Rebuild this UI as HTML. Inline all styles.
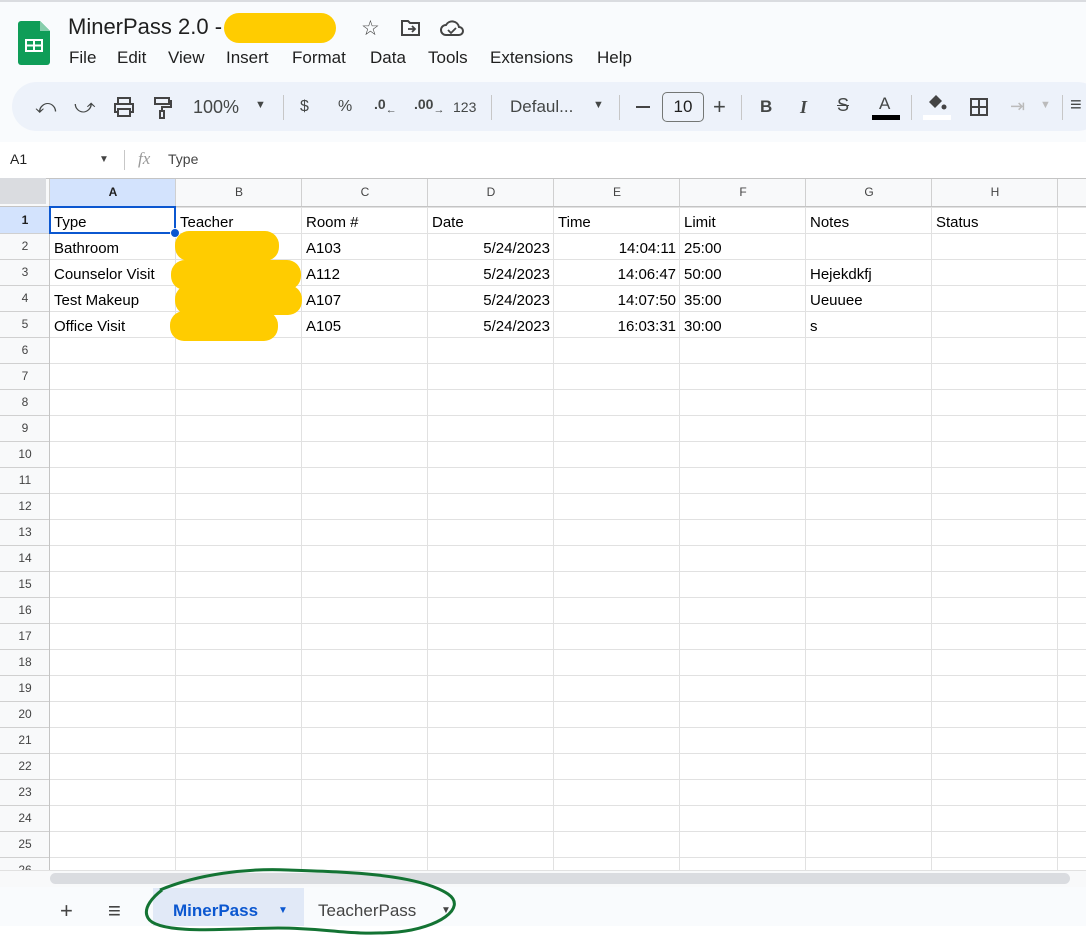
<!DOCTYPE html>
<html><head><style>
*{margin:0;padding:0;box-sizing:border-box}
body{width:1086px;height:936px;overflow:hidden;background:#f9fbfd;font-family:"Liberation Sans",Arial,sans-serif;position:relative;color:#444746}
.a{position:absolute}
.m{position:absolute;top:48px;font-size:17px;color:#1f1f1f}
.tb{font-size:15px;color:#444746}
.cell{position:absolute;font-size:15px;color:#000;height:26px;line-height:29px;white-space:nowrap}
.rh{position:absolute;left:0;width:50px;text-align:center;font-size:12px;color:#444;height:26px;line-height:26px}
.ch{position:absolute;top:178px;height:29px;line-height:29px;text-align:center;font-size:12px;color:#444;width:126px}
.blob{position:absolute;background:#ffcc00;border-radius:14px}
</style></head><body>
<div class="a" style="left:0;top:0;width:1086px;height:2px;background:#dadce0"></div>
<svg class="a" style="left:18px;top:21px" width="32" height="44" viewBox="0 0 32 44"><path d="M3 0h19l10 10v31a3 3 0 0 1-3 3H3a3 3 0 0 1-3-3V3a3 3 0 0 1 3-3z" fill="#0f9d58"/><path d="M22 0v10h10z" fill="#87ceac"/><rect x="7" y="18" width="18" height="13" fill="#fff"/><rect x="9" y="20" width="6" height="3.5" fill="#0f9d58"/><rect x="17" y="20" width="6" height="3.5" fill="#0f9d58"/><rect x="9" y="25.5" width="6" height="3.5" fill="#0f9d58"/><rect x="17" y="25.5" width="6" height="3.5" fill="#0f9d58"/></svg>
<div class="a" style="left:68px;top:14px;font-size:22px;color:#1f1f1f">MinerPass 2.0 -</div>
<div class="blob" style="left:224px;top:13px;width:112px;height:30px;border-radius:15px"></div>
<div class="a" style="left:361px;top:16px;font-size:21px;color:#444">☆</div>
<svg class="a" style="left:400px;top:19px" width="22" height="18" viewBox="0 0 22 18"><path d="M2 2h6l2 2h9v12H2z" fill="none" stroke="#444" stroke-width="2"/><path d="M8 10h7M12 7l3 3-3 3" fill="none" stroke="#444" stroke-width="1.8"/></svg>
<svg class="a" style="left:440px;top:19px" width="24" height="18" viewBox="0 0 24 18"><path d="M6 16a5 5 0 0 1 0-10 7 7 0 0 1 13 2 4 4 0 0 1 0 8z" fill="none" stroke="#444" stroke-width="2"/><path d="M8 11l3 3 5-5" fill="none" stroke="#444" stroke-width="1.8"/></svg>
<div class="m" style="left:69px">File</div><div class="m" style="left:117px">Edit</div><div class="m" style="left:168px">View</div><div class="m" style="left:226px">Insert</div><div class="m" style="left:292px">Format</div><div class="m" style="left:370px">Data</div><div class="m" style="left:428px">Tools</div><div class="m" style="left:490px">Extensions</div><div class="m" style="left:597px">Help</div>
<div class="a" style="left:12px;top:82px;width:1090px;height:49px;background:#edf2fa;border-radius:25px"></div>
<div class="a tb" style="left:35px;top:96px;font-size:20px">⤺</div>
<div class="a tb" style="left:74px;top:96px;font-size:20px">⤻</div>
<svg class="a" style="left:113px;top:97px" width="22" height="20" viewBox="0 0 22 20"><path d="M5 6V1h12v5M5 15H2V7h18v8h-3M5 12h12v7H5z" fill="none" stroke="#444" stroke-width="2"/></svg>
<svg class="a" style="left:152px;top:96px" width="20" height="23" viewBox="0 0 20 23"><path d="M3 2h14v6H3zM17 5h2v6h-9v4M8 15h4v7H8z" fill="none" stroke="#444" stroke-width="2"/></svg>
<div class="a tb" style="left:193px;top:97px;font-size:18px">100%</div>
<div class="a tb" style="left:255px;top:99px;font-size:11px">▼</div>
<div class="a" style="left:283px;top:95px;width:1px;height:25px;background:#c7c7c7"></div>
<div class="a tb" style="left:300px;top:98px;font-size:16px">$</div>
<div class="a tb" style="left:338px;top:98px;font-size:16px">%</div>
<div class="a tb" style="left:374px;top:96px;font-size:14px;font-weight:bold">.0<sub style="font-size:11px">←</sub></div>
<div class="a tb" style="left:414px;top:96px;font-size:14px;font-weight:bold">.00<sub style="font-size:11px">→</sub></div>
<div class="a tb" style="left:453px;top:99px;font-size:14px">123</div>
<div class="a" style="left:491px;top:95px;width:1px;height:25px;background:#c7c7c7"></div>
<div class="a tb" style="left:510px;top:97px;font-size:17px">Defaul...</div>
<div class="a tb" style="left:593px;top:99px;font-size:11px">▼</div>
<div class="a" style="left:619px;top:95px;width:1px;height:25px;background:#c7c7c7"></div>
<div class="a" style="left:636px;top:106px;width:14px;height:2px;background:#444"></div>
<div class="a" style="left:662px;top:92px;width:42px;height:30px;border:1px solid #747775;border-radius:5px;text-align:center;line-height:28px;font-size:17px;color:#1f1f1f">10</div>
<div class="a tb" style="left:713px;top:94px;font-size:22px">+</div>
<div class="a" style="left:741px;top:95px;width:1px;height:25px;background:#c7c7c7"></div>
<div class="a tb" style="left:760px;top:97px;font-size:17px;font-weight:bold">B</div>
<div class="a tb" style="left:800px;top:97px;font-size:18px;font-style:italic;font-family:'Liberation Serif',serif;font-weight:bold">I</div>
<div class="a tb" style="left:837px;top:95px;font-size:18px;text-decoration:line-through">S</div>
<div class="a tb" style="left:879px;top:94px;font-size:17px">A</div>
<div class="a" style="left:872px;top:115px;width:28px;height:5px;background:#000"></div>
<div class="a" style="left:911px;top:95px;width:1px;height:25px;background:#c7c7c7"></div>
<svg class="a" style="left:925px;top:93px" width="22" height="18" viewBox="0 0 22 18"><path d="M4 9l7-7 6 6-7 7z" fill="#444"/><circle cx="19" cy="14" r="2.5" fill="#444"/></svg>
<div class="a" style="left:923px;top:115px;width:28px;height:5px;background:#fff"></div>
<svg class="a" style="left:969px;top:97px" width="20" height="20" viewBox="0 0 20 20"><path d="M2 2h16v16H2zM10 2v16M2 10h16" fill="none" stroke="#444" stroke-width="2"/></svg>
<div class="a tb" style="left:1010px;top:96px;font-size:18px;color:#bbb">⇥</div>
<div class="a tb" style="left:1040px;top:99px;font-size:11px;color:#bbb">▼</div>
<div class="a" style="left:1062px;top:95px;width:1px;height:25px;background:#c7c7c7"></div>
<div class="a tb" style="left:1070px;top:94px;font-size:20px">≡</div>
<div class="a" style="left:0;top:142px;width:1086px;height:36px;background:#fff"></div>
<div class="a" style="left:10px;top:151px;font-size:14px;color:#1f1f1f">A1</div>
<div class="a" style="left:99px;top:154px;font-size:10px;color:#444">▼</div>
<div class="a" style="left:124px;top:150px;width:1px;height:20px;background:#c7c7c7"></div>
<div class="a" style="left:138px;top:149px;font-size:17px;font-style:italic;color:#999;font-family:'Liberation Serif',serif">fx</div>
<div class="a" style="left:168px;top:151px;font-size:14px;color:#444">Type</div>
<div class="a" style="left:0;top:178px;width:1086px;height:692px;background:#fff;
background-image:linear-gradient(to right,#e1e1e1 1px,transparent 1px),linear-gradient(to bottom,#e1e1e1 1px,transparent 1px);
background-size:126px 100%,100% 26px;background-position:49px 0,0 29px;"></div>
<div class="a" style="left:0;top:178px;width:50px;height:692px;background:#f8f9fa;background-image:linear-gradient(to bottom,#d0d0d0 1px,transparent 1px);background-size:100% 26px;background-position:0 29px;border-right:1px solid #c4c4c4"></div>
<div class="a" style="left:0;top:178px;width:1086px;height:29px;background:#f8f9fa;border-top:1px solid #c4c4c4;border-bottom:1px solid #c4c4c4;background-image:linear-gradient(to right,#d0d0d0 1px,transparent 1px);background-size:126px 100%;background-position:49px 0"></div>
<div class="a" style="left:0;top:178px;width:46px;height:26px;background:#dadce0"></div>
<div class="a" style="left:50px;top:179px;width:125px;height:27px;background:#d3e3fd"></div>
<div class="a" style="left:0;top:207px;width:50px;height:26px;background:#d3e3fd"></div>
<div class="ch" style="left:50px;font-weight:bold;color:#1f1f1f">A</div>
<div class="ch" style="left:176px">B</div><div class="ch" style="left:302px">C</div><div class="ch" style="left:428px">D</div><div class="ch" style="left:554px">E</div><div class="ch" style="left:680px">F</div><div class="ch" style="left:806px">G</div><div class="ch" style="left:932px">H</div>
<div class="rh" style="top:207px;font-weight:bold;color:#1f1f1f">1</div>
<div class="rh" style="top:233px">2</div><div class="rh" style="top:259px">3</div><div class="rh" style="top:285px">4</div><div class="rh" style="top:311px">5</div><div class="rh" style="top:337px">6</div><div class="rh" style="top:363px">7</div><div class="rh" style="top:389px">8</div><div class="rh" style="top:415px">9</div><div class="rh" style="top:441px">10</div><div class="rh" style="top:467px">11</div><div class="rh" style="top:493px">12</div><div class="rh" style="top:519px">13</div><div class="rh" style="top:545px">14</div><div class="rh" style="top:571px">15</div><div class="rh" style="top:597px">16</div><div class="rh" style="top:623px">17</div><div class="rh" style="top:649px">18</div><div class="rh" style="top:675px">19</div><div class="rh" style="top:701px">20</div><div class="rh" style="top:727px">21</div><div class="rh" style="top:753px">22</div><div class="rh" style="top:779px">23</div><div class="rh" style="top:805px">24</div><div class="rh" style="top:831px">25</div><div class="rh" style="top:857px;height:13px;overflow:hidden">26</div>
<div class="a" style="left:49px;top:206px;width:127px;height:28px;border:2px solid #0b57d0"></div>
<div class="a" style="left:170px;top:228px;width:10px;height:10px;border-radius:50%;background:#0b57d0;border:1px solid #fff"></div>
<div class="cell" style="left:54px;top:208px">Type</div><div class="cell" style="left:180px;top:208px">Teacher</div><div class="cell" style="left:306px;top:208px">Room #</div><div class="cell" style="left:432px;top:208px">Date</div><div class="cell" style="left:558px;top:208px">Time</div><div class="cell" style="left:684px;top:208px">Limit</div><div class="cell" style="left:810px;top:208px">Notes</div><div class="cell" style="left:936px;top:208px">Status</div>
<div class="cell" style="left:54px;top:234px">Bathroom</div><div class="cell" style="left:306px;top:234px">A103</div><div class="cell" style="left:428px;width:122px;text-align:right;top:234px">5/24/2023</div><div class="cell" style="left:554px;width:122px;text-align:right;top:234px">14:04:11</div><div class="cell" style="left:684px;top:234px">25:00</div>
<div class="cell" style="left:54px;top:260px">Counselor Visit</div><div class="cell" style="left:306px;top:260px">A112</div><div class="cell" style="left:428px;width:122px;text-align:right;top:260px">5/24/2023</div><div class="cell" style="left:554px;width:122px;text-align:right;top:260px">14:06:47</div><div class="cell" style="left:684px;top:260px">50:00</div><div class="cell" style="left:810px;top:260px">Hejekdkfj</div>
<div class="cell" style="left:54px;top:286px">Test Makeup</div><div class="cell" style="left:306px;top:286px">A107</div><div class="cell" style="left:428px;width:122px;text-align:right;top:286px">5/24/2023</div><div class="cell" style="left:554px;width:122px;text-align:right;top:286px">14:07:50</div><div class="cell" style="left:684px;top:286px">35:00</div><div class="cell" style="left:810px;top:286px">Ueuuee</div>
<div class="cell" style="left:54px;top:312px">Office Visit</div><div class="cell" style="left:306px;top:312px">A105</div><div class="cell" style="left:428px;width:122px;text-align:right;top:312px">5/24/2023</div><div class="cell" style="left:554px;width:122px;text-align:right;top:312px">16:03:31</div><div class="cell" style="left:684px;top:312px">30:00</div><div class="cell" style="left:810px;top:312px">s</div>
<div class="blob" style="left:175px;top:231px;width:104px;height:30px"></div>
<div class="blob" style="left:171px;top:260px;width:130px;height:30px"></div>
<div class="blob" style="left:175px;top:285px;width:127px;height:30px"></div>
<div class="blob" style="left:170px;top:311px;width:108px;height:30px"></div>
<div class="a" style="left:0;top:870px;width:1086px;height:17px;background:#f8f9fa;border-top:1px solid #e1e1e1"></div>
<div class="a" style="left:50px;top:873px;width:1020px;height:11px;background:#dadce0;border-radius:6px"></div>
<div class="a" style="left:60px;top:898px;font-size:22px;color:#444">+</div>
<div class="a" style="left:108px;top:898px;font-size:22px;color:#444">≡</div>
<div class="a" style="left:153px;top:888px;width:151px;height:38px;background:#e1e9f7"></div>
<div class="a" style="left:173px;top:901px;font-size:17px;font-weight:bold;color:#0b57d0">MinerPass</div>
<div class="a" style="left:278px;top:905px;font-size:10px;color:#0b57d0">▼</div>
<div class="a" style="left:318px;top:901px;font-size:17px;color:#444">TeacherPass</div>
<div class="a" style="left:441px;top:905px;font-size:10px;color:#444">▼</div>
<div class="a" style="left:0;top:926px;width:1086px;height:10px;background:#fff"></div>
<svg class="a" style="left:138px;top:864px" width="332" height="72" viewBox="0 0 332 72"><path d="M22 26C60 10 110 4 150 6c60 2 130 4 160 24 20 14-10 34-50 38-50 4-70-4-120-4-40 0-120 8-130-10-6-10 6-22 14-28" fill="none" stroke="#137333" stroke-width="3"/></svg>
</body></html>
